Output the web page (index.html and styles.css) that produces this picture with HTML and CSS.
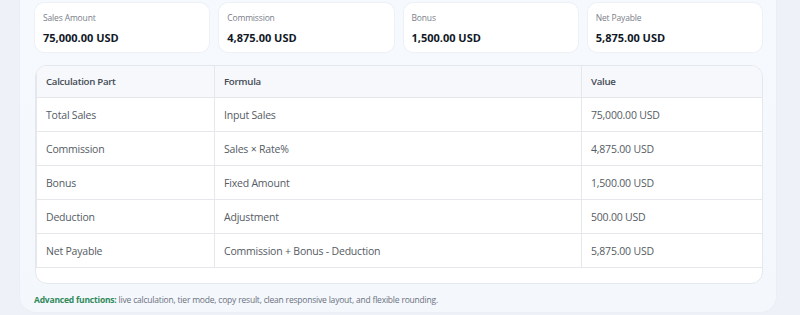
FILE: index.html
```html
<!DOCTYPE html>
<html lang="en">
<head>
<meta charset="utf-8">
<link rel="stylesheet" href="styles.css">
</head>
<body>
<div class="panel">
  <div class="cards">
    <div class="card"><div class="label">Sales Amount</div><div class="value">75,000.00 USD</div></div>
    <div class="card"><div class="label">Commission</div><div class="value">4,875.00 USD</div></div>
    <div class="card"><div class="label">Bonus</div><div class="value">1,500.00 USD</div></div>
    <div class="card"><div class="label">Net Payable</div><div class="value">5,875.00 USD</div></div>
  </div>
  <div class="table-wrap">
    <table class="calc">
      <thead>
        <tr><th class="c1">Calculation Part</th><th class="c2">Formula</th><th class="c3">Value</th></tr>
      </thead>
      <tbody>
        <tr><td>Total Sales</td><td>Input Sales</td><td>75,000.00 USD</td></tr>
        <tr><td>Commission</td><td>Sales × Rate%</td><td>4,875.00 USD</td></tr>
        <tr><td>Bonus</td><td>Fixed Amount</td><td>1,500.00 USD</td></tr>
        <tr><td>Deduction</td><td>Adjustment</td><td>500.00 USD</td></tr>
        <tr><td>Net Payable</td><td>Commission + Bonus - Deduction</td><td>5,875.00 USD</td></tr>
      </tbody>
    </table>
  </div>
  <p class="note"><strong>Advanced functions:</strong> live calculation, tier mode, copy result, clean responsive layout, and flexible rounding.</p>
</div>
</body>
</html>
```
FILE: styles.css
```css
html, body {
  margin: 0;
  padding: 0;
}
body {
  background: #eef2f8;
  font-family: "Open Sans", "Noto Sans", sans-serif;
  color: #374151;
  height: 315px;
  overflow: hidden;
}
.panel {
  margin: -20px 0 0 20px;
  width: 756px;
  box-sizing: border-box;
  padding: 23px 14px 0 15px;
  height: 332px;
  background: linear-gradient(180deg, #f6f9fd 0%, #f4f7fc 100%);
  border-radius: 16px;
  box-shadow: 0 0 0 1px #eaeff6;
}
.cards {
  display: grid;
  grid-template-columns: repeat(4, 1fr);
  gap: 10px;
  width: 727px;
}
.card {
  background: #ffffff;
  border-radius: 9px;
  height: 49px;
  box-sizing: border-box;
  padding: 9px 8px 0 8px;
  box-shadow: 0 0 0 1px #edf1f6;
}
.label {
  font-size: 8.5px;
  letter-spacing: -0.15px;
  color: #7a808a;
  line-height: 12px;
}
.value {
  margin-top: 7px;
  font-size: 11px;
  font-weight: 700;
  color: #111827;
  line-height: 14px;
}
.table-wrap {
  margin-top: 13px;
  width: 728px;
  background: #ffffff;
  border: 1px solid #e3e8ef;
  border-radius: 12px;
  padding-bottom: 15px;
  overflow: hidden;
  box-sizing: border-box;
}
.calc {
  border-collapse: collapse;
  width: 727px;
  font-size: 10.5px;
  letter-spacing: -0.2px;
  color: #555b64;
}
.calc th, .calc td {
  text-align: left;
  padding: 0 9px;
  border: 1px solid #e5e7eb;
}
.calc th {
  height: 31px;
  font-size: 9.7px;
  letter-spacing: -0.3px;
  font-weight: 600;
  color: #444b55;
  background: #f6f8fc;
}
.calc td {
  height: 33px;
}
.calc thead tr th { border-top: none; }
.c1 { width: 159px; }
.c2 { width: 348px; }
.note {
  margin: 10px 0 0 -1px;
  font-size: 8.5px;
  letter-spacing: -0.2px;
  line-height: 12px;
  color: #6b7280;
}
.note strong {
  color: #2f8a5a;
  font-weight: 700;
}
```
